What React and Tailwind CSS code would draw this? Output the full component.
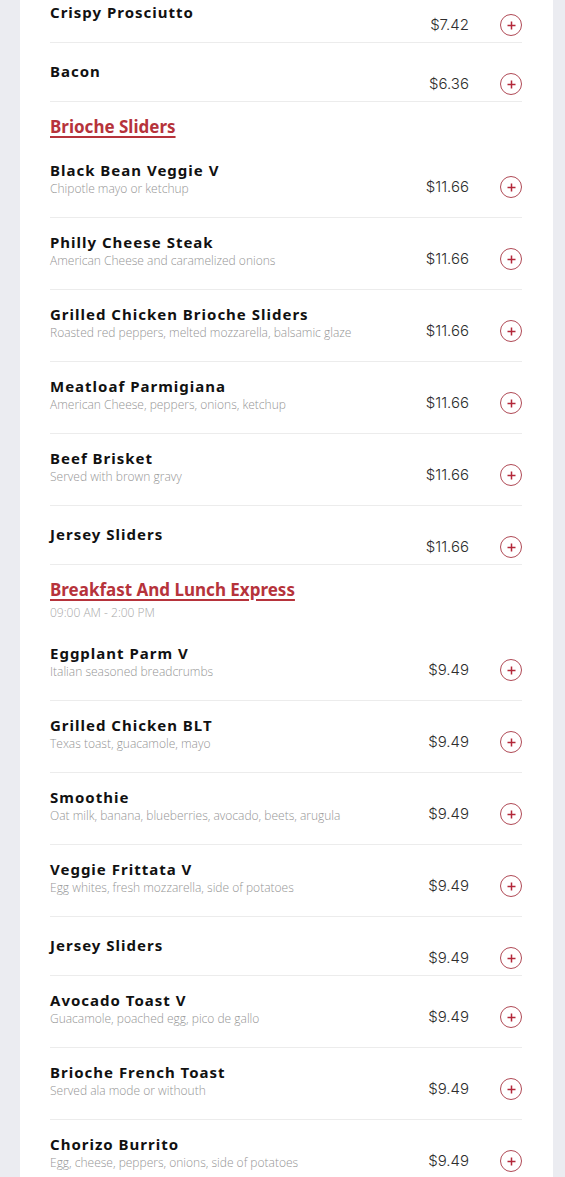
import React from 'react';

const sections = [
  {
    items: [
      { name: 'Crispy Prosciutto', price: '$7.42' },
      { name: 'Bacon', price: '$6.36' },
    ],
  },
  {
    title: 'Brioche Sliders',
    items: [
      { name: 'Black Bean Veggie V', desc: 'Chipotle mayo or ketchup', price: '$11.66' },
      { name: 'Philly Cheese Steak', desc: 'American Cheese and caramelized onions', price: '$11.66' },
      { name: 'Grilled Chicken Brioche Sliders', desc: 'Roasted red peppers, melted mozzarella, balsamic glaze', price: '$11.66' },
      { name: 'Meatloaf Parmigiana', desc: 'American Cheese, peppers, onions, ketchup', price: '$11.66' },
      { name: 'Beef Brisket', desc: 'Served with brown gravy', price: '$11.66' },
      { name: 'Jersey Sliders', price: '$11.66' },
    ],
  },
  {
    title: 'Breakfast And Lunch Express',
    hours: '09:00 AM - 2:00 PM',
    items: [
      { name: 'Eggplant Parm V', desc: 'Italian seasoned breadcrumbs', price: '$9.49' },
      { name: 'Grilled Chicken BLT', desc: 'Texas toast, guacamole, mayo', price: '$9.49' },
      { name: 'Smoothie', desc: 'Oat milk, banana, blueberries, avocado, beets, arugula', price: '$9.49' },
      { name: 'Veggie Frittata V', desc: 'Egg whites, fresh mozzarella, side of potatoes', price: '$9.49' },
      { name: 'Jersey Sliders', price: '$9.49' },
      { name: 'Avocado Toast V', desc: 'Guacamole, poached egg, pico de gallo', price: '$9.49' },
      { name: 'Brioche French Toast', desc: 'Served ala mode or withouth', price: '$9.49' },
      { name: 'Chorizo Burrito', desc: 'Egg, cheese, peppers, onions, side of potatoes', price: '$9.49' },
    ],
  },
];

function AddButton() {
  return (
    <button className="flex h-[22px] w-[22px] items-center justify-center rounded-full border border-[#b04a56] text-[#b3283a]">
      <svg width="9" height="9" viewBox="0 0 9 9" fill="none" stroke="currentColor" strokeWidth="1.5">
        <path d="M4.5 0.5v8M0.5 4.5h8" />
      </svg>
    </button>
  );
}

function MenuItem({ item }) {
  const hasDesc = Boolean(item.desc);
  return (
    <div className={`flex border-b border-[#ececec] ${hasDesc ? 'h-[72px]' : 'h-[59px]'}`}>
      <div className={`flex-1 min-w-0 ${hasDesc ? 'pt-[14px]' : 'pt-[18px]'}`}>
        <div className="font-['Noto_Sans',sans-serif] text-[15px] font-bold leading-[20px] tracking-[1px] text-[#111]">
          {item.name}
        </div>
        {hasDesc && (
          <div className="pt-px font-['Open_Sans',sans-serif] text-[12px] font-light leading-[15px] text-[#959595]">
            {item.desc}
          </div>
        )}
      </div>
      <div className="flex items-center gap-[31px] pt-[30px] self-start">
        <span className="font-['Inter',sans-serif] text-[15px] font-light leading-[22px] text-[#2e2e2e]">{item.price}</span>
        <AddButton />
      </div>
    </div>
  );
}

function Section({ section }) {
  return (
    <section>
      {section.title && (
        <div className={`pt-[13px] ${section.hours ? 'pb-[8px]' : 'pb-[7px]'}`}>
          <h2 className="font-['Noto_Sans',sans-serif] text-[17px] font-bold leading-[24px] text-[#b6333b] underline decoration-[1.5px] underline-offset-[3px]">
            {section.title}
          </h2>
          {section.hours && (
            <p className="mt-[3px] font-['Open_Sans',sans-serif] text-[12px] font-light leading-[16px] text-[#a8a8a8]">
              {section.hours}
            </p>
          )}
        </div>
      )}
      {section.items.map((item, i) => (
        <MenuItem key={i} item={item} />
      ))}
    </section>
  );
}

export default function App() {
  return (
    <div className="h-[1177px] overflow-hidden bg-[#ebecf1] pl-[20px] pr-[12px]">
      <div className="-mt-[16px] bg-white pl-[30px] pr-[31px] pb-10">
        {sections.map((s, i) => (
          <Section key={i} section={s} />
        ))}
      </div>
    </div>
  );
}
